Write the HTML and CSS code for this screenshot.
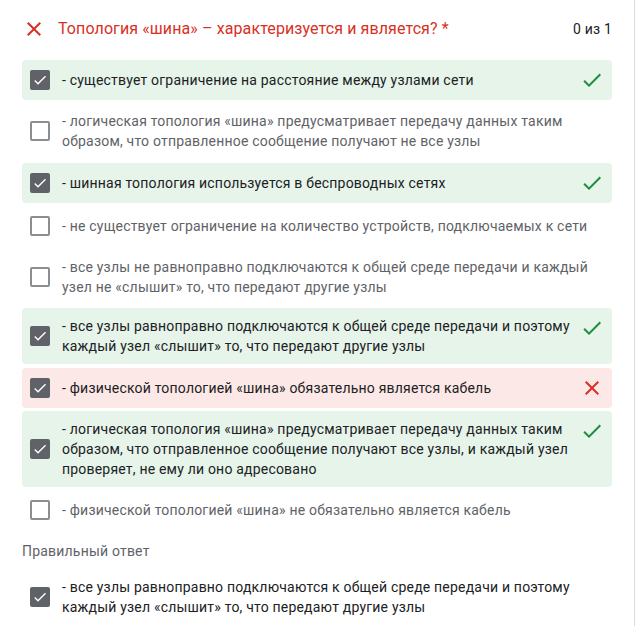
FILE: index.html
```html
<!DOCTYPE html>
<html lang="ru">
<head>
<meta charset="utf-8">
<title>Топология «шина»</title>
<link rel="stylesheet" href="styles.css">
</head>
<body>
<div class="card">
  <div class="header">
    <svg class="icon icon-x head-x" viewBox="0 0 24 24"><path d="M19 6.41L17.59 5 12 10.59 6.41 5 5 6.41 10.59 12 5 17.59 6.41 19 12 13.41 17.59 19 19 17.59 13.41 12z"/></svg>
    <div class="title">Топология «шина» – характеризуется и является? *</div>
    <div class="score">0 из 1</div>
  </div>

  <div class="options">
    <div class="option correct">
      <span class="box checked"><svg viewBox="0 0 24 24"><path d="M9 16.17L4.83 12l-1.42 1.41L9 19 21 7l-1.41-1.41z"/></svg></span>
      <div class="text">- существует ограничение на расстояние между узлами сети</div>
      <svg class="icon icon-check" viewBox="0 0 24 24"><path d="M9 16.17L4.83 12l-1.42 1.41L9 19 21 7l-1.41-1.41z"/></svg>
    </div>
    <div class="option">
      <span class="box"></span>
      <div class="text">- логическая топология «шина» предусматривает передачу данных таким образом, что отправленное сообщение получают не все узлы</div>
    </div>
    <div class="option correct">
      <span class="box checked"><svg viewBox="0 0 24 24"><path d="M9 16.17L4.83 12l-1.42 1.41L9 19 21 7l-1.41-1.41z"/></svg></span>
      <div class="text">- шинная топология используется в беспроводных сетях</div>
      <svg class="icon icon-check" viewBox="0 0 24 24"><path d="M9 16.17L4.83 12l-1.42 1.41L9 19 21 7l-1.41-1.41z"/></svg>
    </div>
    <div class="option">
      <span class="box"></span>
      <div class="text">- не существует ограничение на количество устройств, подключаемых к сети</div>
    </div>
    <div class="option">
      <span class="box"></span>
      <div class="text">- все узлы не равноправно подключаются к общей среде передачи и каждый узел не «слышит» то, что передают другие узлы</div>
    </div>
    <div class="option correct">
      <span class="box checked"><svg viewBox="0 0 24 24"><path d="M9 16.17L4.83 12l-1.42 1.41L9 19 21 7l-1.41-1.41z"/></svg></span>
      <div class="text">- все узлы равноправно подключаются к общей среде передачи и поэтому каждый узел «слышит» то, что передают другие узлы</div>
      <svg class="icon icon-check" viewBox="0 0 24 24"><path d="M9 16.17L4.83 12l-1.42 1.41L9 19 21 7l-1.41-1.41z"/></svg>
    </div>
    <div class="option wrong">
      <span class="box checked"><svg viewBox="0 0 24 24"><path d="M9 16.17L4.83 12l-1.42 1.41L9 19 21 7l-1.41-1.41z"/></svg></span>
      <div class="text">- физической топологией «шина» обязательно является кабель</div>
      <svg class="icon icon-x" viewBox="0 0 24 24"><path d="M19 6.41L17.59 5 12 10.59 6.41 5 5 6.41 10.59 12 5 17.59 6.41 19 12 13.41 17.59 19 19 17.59 13.41 12z"/></svg>
    </div>
    <div class="option correct">
      <span class="box checked"><svg viewBox="0 0 24 24"><path d="M9 16.17L4.83 12l-1.42 1.41L9 19 21 7l-1.41-1.41z"/></svg></span>
      <div class="text">- логическая топология «шина» предусматривает передачу данных таким образом, что отправленное сообщение получают все узлы, и каждый узел проверяет, не ему ли оно адресовано</div>
      <svg class="icon icon-check" viewBox="0 0 24 24"><path d="M9 16.17L4.83 12l-1.42 1.41L9 19 21 7l-1.41-1.41z"/></svg>
    </div>
    <div class="option">
      <span class="box"></span>
      <div class="text">- физической топологией «шина» не обязательно является кабель</div>
    </div>
  </div>

  <div class="answer-label">Правильный ответ</div>
  <div class="option answer">
    <span class="box checked"><svg viewBox="0 0 24 24"><path d="M9 16.17L4.83 12l-1.42 1.41L9 19 21 7l-1.41-1.41z"/></svg></span>
    <div class="text">- все узлы равноправно подключаются к общей среде передачи и поэтому каждый узел «слышит» то, что передают другие узлы</div>
  </div>
</div>
</body>
</html>
```

FILE: styles.css
```css
html, body {
  margin: 0;
  padding: 0;
  background: #ffffff;
}

body {
  font-family: Roboto, "Noto Sans", Arial, sans-serif;
  font-size: 14px;
  line-height: 20px;
  letter-spacing: 0.2px;
  color: #202124;
}

.card {
  width: 635px;
  height: 626px;
  box-sizing: border-box;
  border-right: 1px solid #dadce0;
  padding: 17px 0 0 22px;
  overflow: hidden;
}

.header {
  display: flex;
  align-items: center;
  width: 590px;
  height: 24px;
}

.head-x {
  margin-right: 12px;
}

.title {
  flex: 1;
  font-size: 16px;
  line-height: 24px;
  letter-spacing: 0.1px;
  color: #d93025;
}

.score {
  font-size: 14px;
  line-height: 24px;
  color: #202124;
}

.options {
  display: flex;
  flex-direction: column;
  gap: 3.25px;
  width: 590px;
  margin-top: 19px;
}

.option {
  display: flex;
  align-items: center;
  min-height: 24px;
  padding: 8px;
  border-radius: 4px;
  color: #5f6368;
}

.option.correct {
  background: #e6f4ea;
  color: #202124;
}

.option.wrong {
  background: #fce8e6;
  color: #202124;
}

.option.answer {
  width: 590px;
  box-sizing: border-box;
  min-height: 40px;
  color: #202124;
}

.text {
  flex: 1;
}

.icon {
  flex: none;
  width: 24px;
  height: 24px;
  align-self: flex-start;
}

.option .icon {
  margin-left: 8px;
}

.icon-check {
  fill: #1e8e3e;
}

.icon-x {
  fill: #d93025;
}

.box {
  flex: none;
  width: 20px;
  height: 20px;
  margin-right: 12px;
  box-sizing: border-box;
  border: 2px solid #8a8d91;
  border-radius: 2px;
  display: flex;
  align-items: center;
  justify-content: center;
}

.box.checked {
  background: #5f6368;
  border-color: #5f6368;
}

.box svg {
  width: 18px;
  height: 18px;
  fill: #ffffff;
}

.answer-label {
  margin-top: 11px;
  line-height: 20px;
  color: #5f6368;
  margin-bottom: 8px;
}
```
